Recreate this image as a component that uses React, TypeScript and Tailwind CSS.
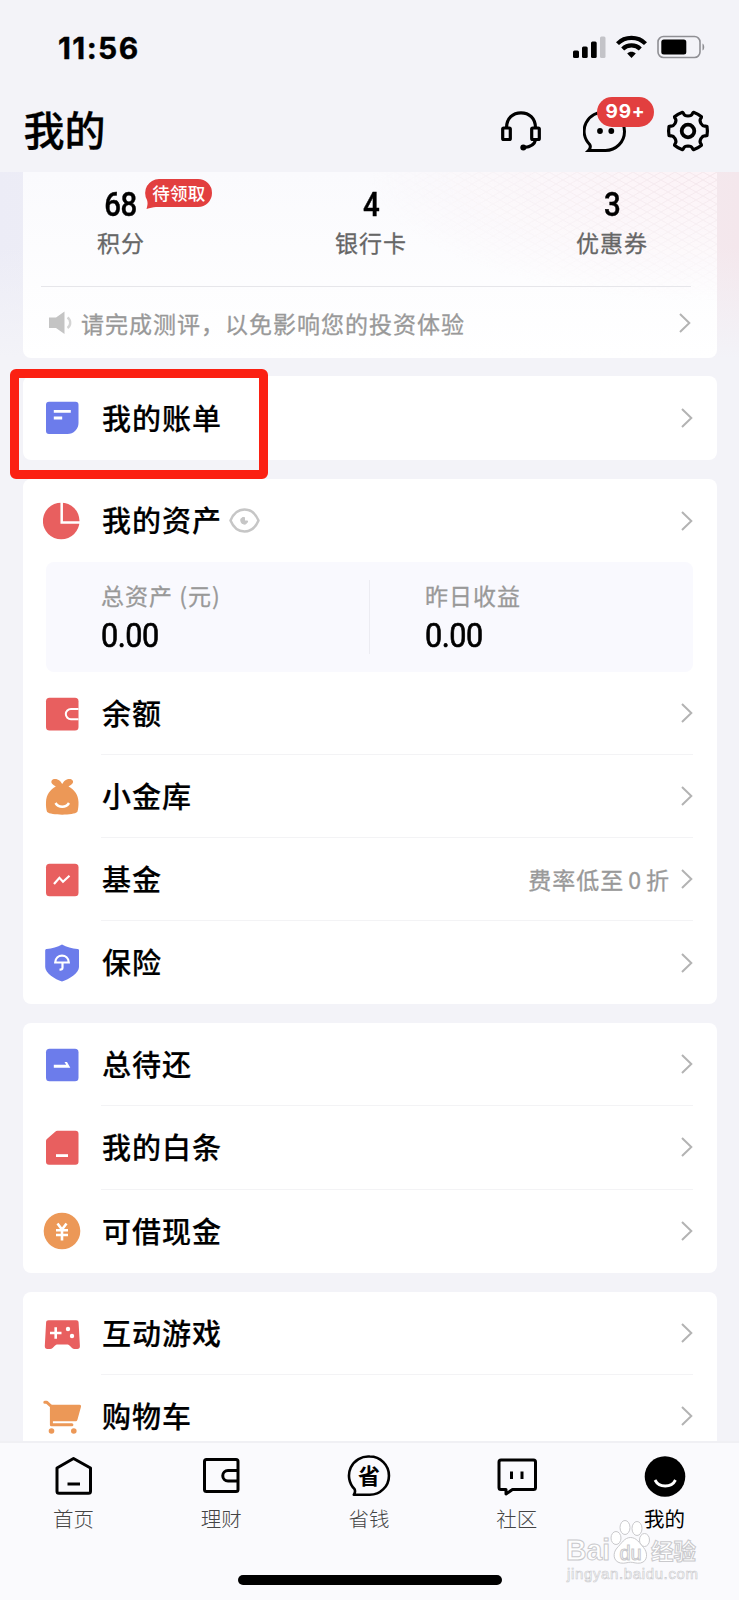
import type { ReactNode } from 'react';

const SANS = "font-['Noto_Sans_CJK_SC','Noto_Sans',sans-serif]";

// outline of the settings gear: six teeth around (22, 22)
const gearPath = () => {
    const at = (r: number, side: number, deg: number) => {
        const a = (deg * Math.PI) / 180;
        const x = 22 + r * Math.cos(a) - side * Math.sin(a);
        const y = 22 + r * Math.sin(a) + side * Math.cos(a);
        return `${x.toFixed(2)} ${y.toFixed(2)}`;
    };
    let d = `M${at(19, -4.6, 0)}`;
    for (let deg = 0; deg < 360; deg += 60) {
        d += `Q${at(19.8, 0, deg)} ${at(19, 4.6, deg)}`;
        d += `C${at(16.5, 5.8, deg)} ${at(15.2, -5.5, deg + 30)} ${at(15, 0, deg + 30)}`;
        d += `C${at(15.2, 5.5, deg + 30)} ${at(16.5, -5.8, deg + 60)} ${at(19, -4.6, deg + 60)}`;
    }
    return d + 'Z';
};

const StatusBar = () => (
    <div className="flex h-[92px] items-center justify-between pl-[58px] pr-[34px]">
        <span className="mt-[3px] font-['Inter',sans-serif] text-[30px] font-bold leading-none tracking-[1.4px] text-black [-webkit-text-stroke:0.4px_black]">
            11:56
        </span>
        <div className="flex items-center gap-[10px] pt-[1px]">
            <svg width="33" height="24" viewBox="0 0 33 24">
                <rect x="0" y="15.5" width="6" height="7.5" rx="1.5" />
                <rect x="9" y="11.5" width="5.7" height="11.5" rx="1.5" />
                <rect x="18" y="6.5" width="5.7" height="16.5" rx="1.5" />
                <rect x="27" y="1.5" width="5.5" height="21.5" rx="1.5" fill="#c3c3c8" />
            </svg>
            <svg width="31" height="24" viewBox="0 0 31 24" fill="none" stroke="#000" strokeWidth="4.2">
                <path d="M1.5 8.6C9 .9 22 .9 29.5 8.6" />
                <path d="M6.7 14c4.8-4.8 12.8-4.8 17.6 0" />
                <path d="M11.2 18.6c2.4-2.4 6.2-2.4 8.6 0l-4.3 4.4z" fill="#000" stroke="none" />
            </svg>
            <svg width="48" height="24" viewBox="0 0 48 24" fill="none">
                <rect x="1" y="1.5" width="42" height="21" rx="5.5" stroke="#8f8f94" strokeWidth="1.6" />
                <rect x="4.3" y="4.5" width="25" height="15" rx="2.5" fill="#000" />
                <path d="M45.5 8.5c2.3 1 2.3 6 0 7z" fill="#8f8f94" />
            </svg>
        </div>
    </div>
);

const Header = () => (
    <div className="flex h-20 items-start justify-between pl-[23.5px] pr-[29px] pt-[7px]">
        <h1 className="text-[41px] font-medium leading-[58px] text-black [-webkit-text-stroke:0.3px_black]">我的</h1>
        <div className="mt-[10px] flex">
            <svg width="44" height="44" viewBox="0 0 44 44" fill="none" stroke="#000" strokeWidth="3.2">
                <path d="M7.5 19C7.5 9 14 3.8 22 3.8S36.5 9 36.5 19" />
                <rect x="3.7" y="19" width="7.6" height="11.5" rx="1" />
                <rect x="32.7" y="19" width="7.6" height="11.5" rx="1" />
                <path d="M36.5 31c-.8 4-4.5 7-11.5 7.5" />
                <circle cx="24.3" cy="38.5" r="3" fill="#000" stroke="none" />
            </svg>
            <div className="relative ml-10 mr-[39px]">
                <svg width="44" height="44" viewBox="0 0 44 44" fill="none" stroke="#000" strokeWidth="3">
                    <path d="M22.5 3.5a18.9 18.9 0 0 1 0 38H5.5c1.8-1.8 2.4-3.8 1.2-6A18.8 18.8 0 0 1 22.5 3.5z" />
                    <circle cx="17" cy="22" r="2.9" fill="#000" stroke="none" />
                    <circle cx="28.3" cy="22" r="2.9" fill="#000" stroke="none" />
                </svg>
                <span className="absolute -top-[12px] left-[14px] flex h-[30px] w-[57px] items-center justify-center rounded-full bg-[#e23f3f] font-['Inter',sans-serif] text-[19px] font-bold tracking-[0.8px] text-white">
                    99+
                </span>
            </div>
            <svg width="44" height="44" viewBox="0 0 44 44" fill="none" stroke="#000">
                <path d={gearPath()} strokeWidth="3.2" strokeLinejoin="round" />
                <circle cx="22" cy="22" r="6.3" strokeWidth="3.8" />
            </svg>
        </div>
    </div>
);

const Chevron = () => (
    <svg className="shrink-0" width="12" height="20" viewBox="0 0 12 20" fill="none" stroke="#b3b3b3" strokeWidth="2">
        <path d="M1 1l9.3 9L1 19" />
    </svg>
);

const Stat = ({ value, label, badge }: { value: string; label: string; badge?: string }) => (
    <div className="flex flex-col items-center">
        <div className="relative">
            <div className="scale-x-[0.88] font-['Roboto',sans-serif] text-[33.5px] font-medium leading-[38px] tracking-[-0.5px] text-black [-webkit-text-stroke:0.4px_black]">
                {value}
            </div>
            {badge && (
                <span className="absolute -top-[7px] left-[43px] flex h-[28px] w-[67px] items-center justify-center">
                    <svg className="absolute left-0 top-0" width="67" height="30" viewBox="0 0 67 30" fill="#e23f3f">
                        <path d="M14 0h39a14 14 0 0 1 0 28H11c-3 .3-6 1-9.500 2 1-3.500 1.500-6 .5-9A14 14 0 0 1 14 0z" />
                    </svg>
                    <span className="relative whitespace-nowrap text-[17.5px] font-medium leading-none tracking-[0.3px] text-white">
                        {badge}
                    </span>
                </span>
            )}
        </div>
        <span className="mt-[2px] text-[23px] leading-[32px] tracking-[1px] text-[#666] [-webkit-text-stroke:0.3px_#666]">{label}</span>
    </div>
);

const SummaryCard = () => (
    <div className="relative h-[186px] overflow-hidden rounded-b-lg bg-gradient-to-b from-[#fafafd] to-white">
        {/* faint woven lines in the upper right corner */}
        <svg className="absolute right-0 top-0" width="350" height="130" viewBox="0 0 350 130">
            <defs>
                <pattern id="weave" width="14" height="8" patternUnits="userSpaceOnUse">
                    <path d="M0 8L14 0M0 0l14 8" stroke="#f1e2e7" strokeWidth=".8" />
                </pattern>
                <radialGradient id="fade" cx="1" cy="0" r="1">
                    <stop offset="0" stopColor="#fff" />
                    <stop offset="1" stopColor="#000" />
                </radialGradient>
                <mask id="corner">
                    <rect width="350" height="130" fill="url(#fade)" />
                </mask>
            </defs>
            <g mask="url(#corner)">
                <rect width="350" height="130" fill="#fdf0f3" opacity=".7" />
                <rect width="350" height="130" fill="url(#weave)" />
            </g>
        </svg>
        <div className="relative">
            <div className="grid h-[114px] grid-cols-[196px_304px_178px] pt-[14px]">
                <Stat value="68" label="积分" badge="待领取" />
                <Stat value="4" label="银行卡" />
                <Stat value="3" label="优惠券" />
            </div>
            <div className="ml-[18px] mr-[26px] flex h-[72px] items-center border-t border-[#e6e6ea] pl-[8px] pt-px">
                <svg className="shrink-0" width="25" height="24" viewBox="0 0 25 24" fill="#c4c4c4">
                    <path d="M0 6.5h7l8.5-6v22.5l-8.5-6H0z" />
                    <path d="M18.5 6.5c3.6 2.5 3.6 8 0 10.5" fill="none" stroke="#d4d4d4" strokeWidth="2.4" />
                </svg>
                <span className="ml-[7px] flex-1 text-[23px] leading-none tracking-[1px] text-[#999] [-webkit-text-stroke:0.3px_#999]">
                    请完成测评，以免影响您的投资体验
                </span>
                <Chevron />
            </div>
        </div>
    </div>
);

const RED = '#e85f5f';
const BLUE = '#6c7ceb';
const ORANGE = '#ec9857';

const Icon = ({ children }: { children: ReactNode }) => (
    <svg className="shrink-0" width="38" height="38" viewBox="0 0 38 38" fill="none">
        {children}
    </svg>
);

const icons = {
    bill: (
        <Icon>
            <path d="M6 2.7h26.5a3 3 0 0 1 3 3V24a11 11 0 0 1-11 11H6a3 3 0 0 1-3-3V5.7a3 3 0 0 1 3-3z" fill={BLUE} />
            <path d="M10.8 12.3h17M10.8 19h8.4" stroke="#fff" strokeWidth="2.8" />
        </Icon>
    ),
    pie: (
        <Icon>
            <circle cx="18.2" cy="19" r="18.3" fill={RED} />
            <path d="M18.7 0v20.5H38" stroke="#fff" strokeWidth="2.5" />
        </Icon>
    ),
    wallet: (
        <Icon>
            <rect x="3" y="2.7" width="32.5" height="32.8" rx="3.5" fill={RED} />
            <path d="M35.5 13.9h-7.500a5.200 5.200 0 0 0 0 10.400h7.500" stroke="#fff" strokeWidth="2" />
        </Icon>
    ),
    bag: (
        <Icon>
            <path d="M12.8 8.5C10 6.5 7.8 5.5 8.5 3c.8-2.300 4-2.200 6-1.500 2.200.8 3.700 2.700 4.700 4.500 1-1.800 2.500-3.700 4.700-4.500 2-.7 5.200-.8 6 1.500.7 2.500-1.500 3.500-4.400 5.500 6 3.200 9.800 8.500 10 15.500.1 4-.3 7.500-1.200 10-3.700 3.500-26.500 3.500-30.200 0C3.200 31.500 2.800 28 3 24c.3-7 4-12.300 9.800-15.500z" fill={ORANGE} />
            <path d="M12.5 25c3.2 5 10.3 5 13.5 0" stroke="#fff" strokeWidth="2.5" />
        </Icon>
    ),
    fund: (
        <Icon>
            <rect x="3" y="2.7" width="32.5" height="32.5" rx="3.5" fill={RED} />
            <path d="M11 23l5.4-6.2 3.6 4 6.5-6" stroke="#fff" strokeWidth="2.2" />
        </Icon>
    ),
    shield: (
        <Icon>
            <path d="M19 .5c4.5 2.5 10 4.3 15.5 4.5 1 0 1.5.6 1.5 1.5V23c0 6-10 12.5-17 14.5C12 35.5 2.2 29 2.2 23V6.500c0-.9.5-1.500 1.500-1.500C9 4.800 14.500 3 19 .5z" fill={BLUE} />
            <path d="M12.2 18.5c.5-9.3 13.1-9.3 13.6 0zM19.5 18.5v5.2c0 1.5-1 2-3 1.800" stroke="#fff" strokeWidth="2.2" />
        </Icon>
    ),
    total: (
        <Icon>
            <rect x="3" y="2.7" width="32.5" height="32.5" rx="3.5" fill={BLUE} />
            <path d="M10.8 18.8h12.4L21.500 16h2.500l3.300 5.800H10.800z" fill="#fff" />
        </Icon>
    ),
    baitiao: (
        <Icon>
            <path d="M14.5 1.8H32.5a3 3 0 0 1 3 3v28a3 3 0 0 1-3 3H6a3 3 0 0 1-3-3V12c0-1 .4-1.700 1.200-2.300l8-7c.7-.6 1.400-.9 2.300-.9z" fill={RED} />
            <path d="M13 26.6h12" stroke="#fff" strokeWidth="2.8" />
        </Icon>
    ),
    cash: (
        <Icon>
            <circle cx="19" cy="19" r="18.3" fill={ORANGE} />
            <path d="M14.5 11.5l4.5 6 4.5-6M19 17.5v11M13 18.2h12M13 23h12" stroke="#fff" strokeWidth="2.6" />
        </Icon>
    ),
    game: (
        <Icon>
            <path d="M5.5 5.2h27.7c1.5 0 2.3.8 2.4 2.3l1.3 23.5c.1 2-.8 3-2.700 3h-2.700c-1 0-1.700-.3-2.500-1l-2.200-2.200c-1-1-1.700-1.300-2.900-1.300h-9.200c-1.200 0-1.900.3-2.900 1.300L9.600 33c-.8.7-1.500 1-2.500 1H4.500c-1.900 0-2.800-1-2.700-3L3.100 7.500c.1-1.500.9-2.300 2.400-2.300z" fill={RED} />
            <path d="M7 18h11.5M12.7 12.2v11.5" stroke="#fff" strokeWidth="2.6" />
            <circle cx="25" cy="14" r="2.2" fill="#fff" />
            <circle cx="29" cy="21" r="2.2" fill="#fff" />
        </Icon>
    ),
    cart: (
        <Icon>
            <path d="M1.8 4.2h1.8L8.4 8.5v18.2h20.5" stroke={ORANGE} strokeWidth="3" strokeLinecap="round" strokeLinejoin="round" />
            <path d="M7.5 6.8h29c1.2 0 1.8.8 1.5 2l-3.500 12.700c-.3 1.300-1 1.800-2.300 1.800H7.500z" fill={ORANGE} />
            <circle cx="8.5" cy="33" r="2.8" fill={ORANGE} />
            <circle cx="30.8" cy="33" r="2.8" fill={ORANGE} />
        </Icon>
    ),
};

type RowProps = { icon: ReactNode; title: string; extra?: ReactNode; note?: ReactNode; line?: boolean };

const Row = ({ icon, title, extra, note, line }: RowProps) => (
    <div className="flex flex-1 items-center pl-[20px]">
        {icon}
        <div className={`ml-[20px] mr-[24px] flex flex-1 items-center self-stretch ${line ? 'border-b border-[#f3f3f5]' : ''}`}>
            <span className="mb-[2px] ml-px text-[29px] font-medium leading-none tracking-[1px] text-black [-webkit-text-stroke:0.2px_black]">
                {title}
            </span>
            {extra}
            <span className="ml-auto mr-[11px] flex items-center text-[23px] leading-none tracking-[1px] text-[#999] [-webkit-text-stroke:0.3px_#999]">
                {note}
            </span>
            <Chevron />
        </div>
    </div>
);

const Eye = () => (
    <svg className="ml-[7px]" width="31" height="27" viewBox="0 0 31 27" fill="none" stroke="#c6c6c6">
        <path d="M1.5 13.5C4 7.5 9 2.5 15.5 2.5S27 7.5 29.5 13.5C27 19.5 22 24.5 15.5 24.5S4 19.5 1.5 13.5z" strokeWidth="2.5" strokeLinejoin="round" />
        <path d="M15.5 10.500v3.500h3.200c-.4 2-1.700 3.200-3.400 3.200a3.900 3.900 0 0 1-3.600-3.900c0-2.200 1.700-3.200 3.800-2.800z" fill="#c6c6c6" strokeWidth="1" />
    </svg>
);

const Amount = ({ label, value, className }: { label: string; value: string; className: string }) => (
    <div className={`flex flex-col ${className}`}>
        <span className="text-[23px] leading-[30px] tracking-[1px] text-[#999] [-webkit-text-stroke:0.3px_#999]">{label}</span>
        <span className="mt-[6px] origin-left scale-x-[0.9] font-['Roboto',sans-serif] text-[34px] leading-[38px] tracking-[-0.5px] text-black [-webkit-text-stroke:0.7px_black]">
            {value}
        </span>
    </div>
);

const tabs = [
    {
        label: '首页',
        icon: (
            <>
                <path d="M21.5 4.5L38.5 14v23.200a2 2 0 0 1-2 2h-29.500a2 2 0 0 1-2-2V14z" />
                <path d="M15.5 30h12.5" />
            </>
        ),
    },
    {
        label: '理财',
        icon: (
            <>
                <rect x="4.5" y="5.5" width="33.5" height="32" rx="2" />
                <path d="M38 16.5h-10a5 5 0 0 0 0 10.500H38" />
            </>
        ),
    },
    {
        label: '省钱',
        icon: (
            <>
                <path d="M22.8 2.5a19 19 0 0 1 0 38.300H6.800c1.300-1.700 1.600-3.500.8-5.600A19.200 19.200 0 0 1 22.800 2.500z" strokeWidth="2.6" />
                <text x="22" y="29.5" textAnchor="middle" fill="#000" stroke="none" className="text-[22px] font-bold">
                    省
                </text>
            </>
        ),
    },
    {
        label: '社区',
        icon: (
            <>
                <path d="M6 6h32.5a2 2 0 0 1 2 2v25.500a2 2 0 0 1-2 2H17.500l-6.500 4.500V35.500H6a2 2 0 0 1-2-2V8a2 2 0 0 1 2-2z" />
                <path d="M16.5 17.5v7.5M27 17.5v7.5" />
            </>
        ),
    },
    {
        label: '我的',
        active: true,
        icon: (
            <>
                <circle cx="22" cy="22.5" r="20.3" fill="#000" stroke="none" />
                <path d="M12 26c4 8 16.5 8 20.5 0" stroke="#fff" strokeWidth="2.8" />
            </>
        ),
    },
];

const TabBar = () => (
    <div className="h-[159px] border-t-2 border-[#f0f0f4] bg-[#fafafd]">
        <div className="grid grid-cols-5 pt-[11px]">
            {tabs.map((tab) => (
                <div key={tab.label} className="flex flex-col items-center">
                    <svg width="44" height="44" viewBox="0 0 44 44" fill="none" stroke="#000" strokeWidth="3" strokeLinejoin="round">
                        {tab.icon}
                    </svg>
                    <span className={`-ml-px mt-[5px] text-[20.5px] leading-[30px] ${tab.active ? 'text-black' : 'font-light text-[#444]'}`}>
                        {tab.label}
                    </span>
                </div>
            ))}
        </div>
        <div className="mx-auto mt-[42px] h-[10px] w-[264px] rounded-full bg-black" />
    </div>
);

const Watermark = () => (
    <svg className="absolute bottom-[14px] right-[34px]" width="140" height="72" viewBox="0 0 140 72" fill="#fff" stroke="#c9c9cc" strokeWidth="1">
        <g fillOpacity=".85">
            <text x="1" y="46" textLength="44" lengthAdjust="spacingAndGlyphs" className="font-['Liberation_Sans',sans-serif] text-[29px] font-bold">
                Bai
            </text>
            <ellipse cx="51" cy="24" rx="5" ry="6.5" />
            <ellipse cx="60" cy="13.5" rx="5" ry="7" />
            <ellipse cx="72" cy="14.5" rx="5" ry="7" />
            <ellipse cx="79.5" cy="26" rx="5" ry="6.5" />
            <path d="M65.5 23.5c6 0 9 5.5 13 10 4.5 5 4.5 14-3 15.5-4 .8-7-.8-10-.8s-6 1.600-10 .8c-7.500-1.500-8-10-3.500-15 4.500-4.500 7.500-10.500 13.500-10.500z" />
            <text x="54.5" y="45.5" className="font-['Liberation_Sans',sans-serif] text-[20px]">du</text>
            <text x="86" y="45" textLength="45" lengthAdjust="spacingAndGlyphs" className="text-[22px] font-bold">经验</text>
        </g>
        <text x="2" y="65" textLength="131" strokeWidth=".6" className="font-['Liberation_Sans',sans-serif] text-[15px]">
            jingyan.baidu.com
        </text>
    </svg>
);

export default function App() {
    return (
        <div className={`relative flex h-[1600px] w-[739px] flex-col overflow-hidden bg-[#f3f3f8] ${SANS}`}>
            <StatusBar />
            <Header />
            <div className="h-[1269px] shrink-0 overflow-hidden">
                <div className="bg-[linear-gradient(to_bottom,transparent_40%,#f3f3f8),linear-gradient(to_right,#ececf6,#f3f3f8_50%,#f4e7ec)] pl-[23px] pr-[22px]">
                    <SummaryCard />
                </div>
                <div className="flex flex-col gap-[19px] pl-[23px] pr-[22px] pt-[18px]">
                    <div className="flex h-[84px] rounded-lg bg-white">
                        <Row icon={icons.bill} title="我的账单" />
                    </div>
                    <div className="flex h-[525px] flex-col rounded-lg bg-white">
                        <div className="flex h-[83px]">
                            <Row icon={icons.pie} title="我的资产" extra={<Eye />} />
                        </div>
                        <div className="ml-[23px] mr-[24px] flex h-[110px] rounded-lg bg-[#f9f9fe] pt-[18px]">
                            <Amount label="总资产 (元)" value="0.00" className="w-[323px] pl-[55px]" />
                            <div className="h-[74px] w-px bg-[#ececf2]" />
                            <Amount label="昨日收益" value="0.00" className="pl-[55px]" />
                        </div>
                        <Row icon={icons.wallet} title="余额" line />
                        <Row icon={icons.bag} title="小金库" line />
                        <Row
                            icon={icons.fund}
                            title="基金"
                            note={
                                <>
                                    费率低至<span className="mx-[4px]">0</span>折
                                </>
                            }
                            line
                        />
                        <Row icon={icons.shield} title="保险" />
                    </div>
                    <div className="flex h-[250px] flex-col rounded-lg bg-white">
                        <Row icon={icons.total} title="总待还" line />
                        <Row icon={icons.baitiao} title="我的白条" line />
                        <Row icon={icons.cash} title="可借现金" />
                    </div>
                    <div className="flex h-[250px] flex-col rounded-t-lg bg-white">
                        <Row icon={icons.game} title="互动游戏" line />
                        <Row icon={icons.cart} title="购物车" line />
                        <div className="flex-1" />
                    </div>
                </div>
            </div>
            <TabBar />
            <div className="absolute left-[10px] top-[369px] h-[110px] w-[258px] rounded-[6px] border-[9px] border-[#fb2012]" />
            <Watermark />
        </div>
    );
}
